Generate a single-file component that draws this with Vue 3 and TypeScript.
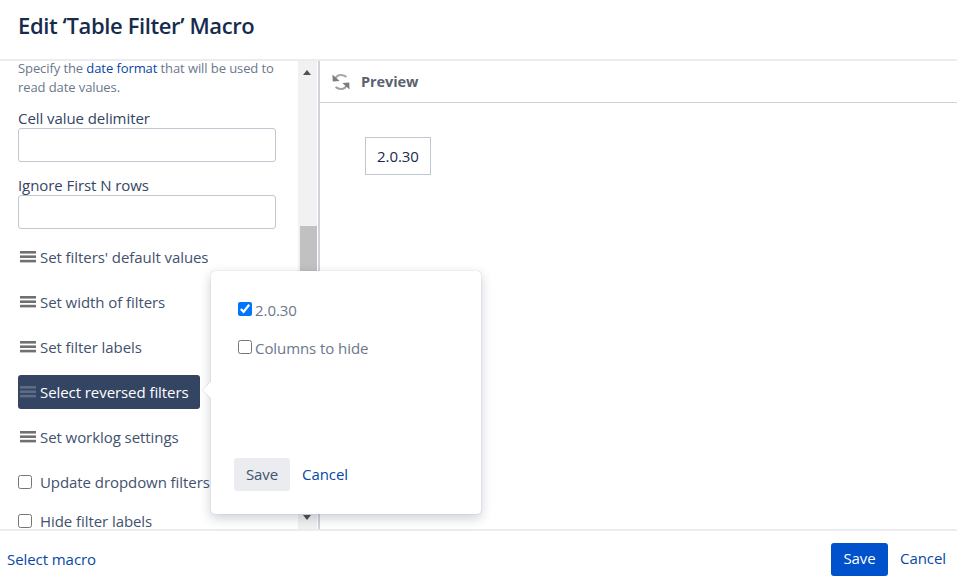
<script setup lang="ts">
interface Row { label: string; active?: boolean }
const rows: Row[] = [
  { label: "Set filters' default values" },
  { label: 'Set width of filters' },
  { label: 'Set filter labels' },
  { label: 'Select reversed filters', active: true },
  { label: 'Set worklog settings' },
]
</script>

<template>
  <div class="dialog">
    <header class="head"><h1>Edit ‘Table Filter’ Macro</h1></header>
    <main class="body">
      <section class="left">
        <div class="form">
          <p class="help">Specify the <a>date format</a> that will be used to read date values.</p>
          <label class="lbl first">Cell value delimiter</label>
          <input class="txt" type="text" />
          <label class="lbl second">Ignore First N rows</label>
          <input class="txt" type="text" />
          <div class="rows">
            <div v-for="r in rows" :key="r.label" class="row" :class="{ active: r.active }">
              <svg class="burger" width="16" height="12" viewBox="0 0 16 12">
                <rect x="0" y="0" width="16" height="2.6" />
                <rect x="0" y="4.4" width="16" height="2.6" />
                <rect x="0" y="8.8" width="16" height="2.6" />
              </svg>
              <span>{{ r.label }}</span>
            </div>
          </div>
          <label class="chk c1"><input type="checkbox" /><span>Update dropdown filters</span></label>
          <label class="chk c2"><input type="checkbox" /><span>Hide filter labels</span></label>
        </div>
        <div class="scroll">
          <i class="arr up"></i>
          <i class="thumb"></i>
          <i class="arr down"></i>
        </div>
      </section>
      <section class="right">
        <div class="pv">
          <svg class="sync" width="18" height="18" viewBox="0 0 18 18" fill="none">
            <path d="M3.2 6.5 C4 3.6 6.4 2 9 2 C11 2 12.8 2.6 14.4 4" stroke="#a8a8a8" stroke-width="2.2" />
            <path d="M0.4 1.4 L0.8 8.6 L7.6 8 Z" fill="#7c7c7c" />
            <path d="M14.8 11.5 C14 14.4 11.6 16 9 16 C7 16 5.2 15.4 3.6 14" stroke="#a0a0a0" stroke-width="2.2" />
            <path d="M17.6 16.6 L17.2 9.4 L10.4 10 Z" fill="#7c7c7c" />
          </svg>
          <b>Preview</b>
        </div>
        <div class="pvbody"><div class="chip">2.0.30</div></div>
      </section>
      <div class="pop">
        <i class="tip"></i>
        <label class="pchk"><input type="checkbox" checked /><span>2.0.30</span></label>
        <label class="pchk p2"><input type="checkbox" /><span>Columns to hide</span></label>
        <div class="pact">
          <button class="sec">Save</button>
          <a>Cancel</a>
        </div>
      </div>
    </main>
    <footer class="foot">
      <a>Select macro</a>
      <div class="fr">
        <button class="pri">Save</button>
        <a>Cancel</a>
      </div>
    </footer>
  </div>
</template>

<style>
html, body { margin: 0; background: #fff; }
</style>

<style scoped>
.dialog {
  width: 957px;
  height: 579px;
  display: flex;
  flex-direction: column;
  overflow: hidden;
  font-family: "Open Sans", "Noto Sans", sans-serif;
  font-size: 15px;
  color: #42526e;
  letter-spacing: -0.07px;
}
a { color: #0747a6; }
.head {
  height: 59px;
  box-sizing: border-box;
  padding: 10px 18px 0;
  flex: none;
}
h1 {
  margin: 0;
  font-size: 22px;
  line-height: 30px;
  font-weight: 600;
  color: #172b4d;
  letter-spacing: -0.38px;
}
.body {
  position: relative;
  flex: none;
  height: 472px;
  box-sizing: border-box;
  border-top: 2px solid #ebecf0;
  border-bottom: 2px solid #ebecf0;
  display: flex;
}
.left {
  width: 320px;
  flex: none;
  display: flex;
  box-sizing: border-box;
  border-right: 2px solid #d0d3d9;
  overflow: hidden;
}
.form {
  width: 298px;
  flex: none;
  box-sizing: border-box;
  padding: 0 22px 0 18px;
  overflow: hidden;
}
.help {
  margin: -2px 0 0;
  font-size: 13px;
  line-height: 19px;
  color: #6b778c;
  letter-spacing: -0.09px;
}
.lbl {
  display: block;
  color: #344563;
  line-height: 19px;
}
.first { margin-top: 12px; }
.second { margin-top: 14px; }
.txt {
  display: block;
  width: 258px;
  height: 34px;
  box-sizing: border-box;
  margin: 0;
  border: 1px solid #c1c7d0;
  border-radius: 3px;
  background: #fff;
}
.rows {
  margin-top: 11px;
  display: flex;
  flex-direction: column;
  align-items: flex-start;
  gap: 11px;
}
.row {
  height: 34px;
  box-sizing: border-box;
  padding: 0 11px 0 2px;
  border-radius: 3px;
  display: flex;
  align-items: center;
  gap: 4px;
  color: #42526e;
  white-space: nowrap;
}
.burger { fill: #707070; flex: none; }
.row.active { background: #344563; color: #fff; }
.row.active .burger { fill: #5e6c84; }
.chk {
  display: flex;
  align-items: center;
  gap: 8px;
  height: 20px;
  color: #42526e;
}
.chk input {
  appearance: none;
  width: 14px;
  height: 14px;
  margin: 0;
  box-sizing: border-box;
  border: 1px solid #767676;
  border-radius: 2.5px;
  background: #fff;
  flex: none;
}
.chk span { white-space: nowrap; }
.c1 { margin-top: 18px; }
.c2 { margin-top: 19px; }
.scroll {
  width: 19px;
  flex: none;
  margin-right: 3px;
  background: #f1f1f1;
  position: relative;
}
.thumb {
  position: absolute;
  left: 2px;
  right: 0;
  top: 165px;
  height: 120px;
  background: #c1c1c1;
}
.arr {
  position: absolute;
  left: 5px;
  width: 0;
  height: 0;
  border-left: 4.5px solid transparent;
  border-right: 4.5px solid transparent;
}
.up { top: 9px; border-bottom: 5px solid #505050; }
.down { bottom: 9px; border-top: 5px solid #505050; }
.right { flex: 1; display: flex; flex-direction: column; }
.pv {
  height: 42px;
  flex: none;
  box-sizing: border-box;
  border-bottom: 1px solid #d0d3d9;
  display: flex;
  align-items: center;
  padding-left: 12px;
  gap: 11px;
  color: #5a6270;
}
.pv b { font-weight: 700; font-size: 14.5px; }
.sync { flex: none; }
.pvbody { padding: 34px 0 0 45px; }
.chip {
  width: 66px;
  height: 38px;
  box-sizing: border-box;
  border: 1px solid #c1c7d0;
  display: flex;
  align-items: center;
  justify-content: center;
  color: #172b4d;
}
.pop {
  position: absolute;
  left: 211px;
  top: 210px;
  width: 270px;
  height: 243px;
  box-sizing: border-box;
  background: #fff;
  border-radius: 4px;
  box-shadow: 0 4px 12px rgba(9, 30, 66, 0.22), 0 0 1px rgba(9, 30, 66, 0.3);
  padding: 28px 27px 0;
  display: flex;
  flex-direction: column;
}
.tip {
  position: absolute;
  left: -8px;
  top: 111px;
  width: 16px;
  height: 16px;
  background: #fff;
  transform: rotate(45deg) scale(0.72);
  box-shadow: -1px 1px 1px rgba(9, 30, 66, 0.08);
}
.pchk {
  display: flex;
  align-items: center;
  gap: 3px;
  height: 20px;
  color: #6b778c;
}
.pchk span { margin-top: 2px; }
.pchk input {
  width: 14px;
  height: 14px;
  margin: 0;
  flex: none;
  accent-color: #0075ff;
}
.p2 { margin-top: 18px; }
.pact {
  margin-top: auto;
  margin-bottom: 23px;
  margin-left: -4px;
  display: flex;
  align-items: center;
  gap: 12px;
}
.pact a, .fr a { margin-bottom: 2px; }
button {
  font: inherit;
  letter-spacing: inherit;
  border: 0;
  border-radius: 3px;
  height: 33px;
  padding: 0 0 2px;
  width: 56px;
}
.sec { background: #ebecf0; color: #42526e; }
.pri { background: #0052cc; color: #fff; width: 57px; }
.foot {
  flex: 1;
  display: flex;
  align-items: center;
  justify-content: space-between;
  padding: 8px 11px 0 7px;
}
.fr { display: flex; align-items: center; gap: 12px; }
</style>
